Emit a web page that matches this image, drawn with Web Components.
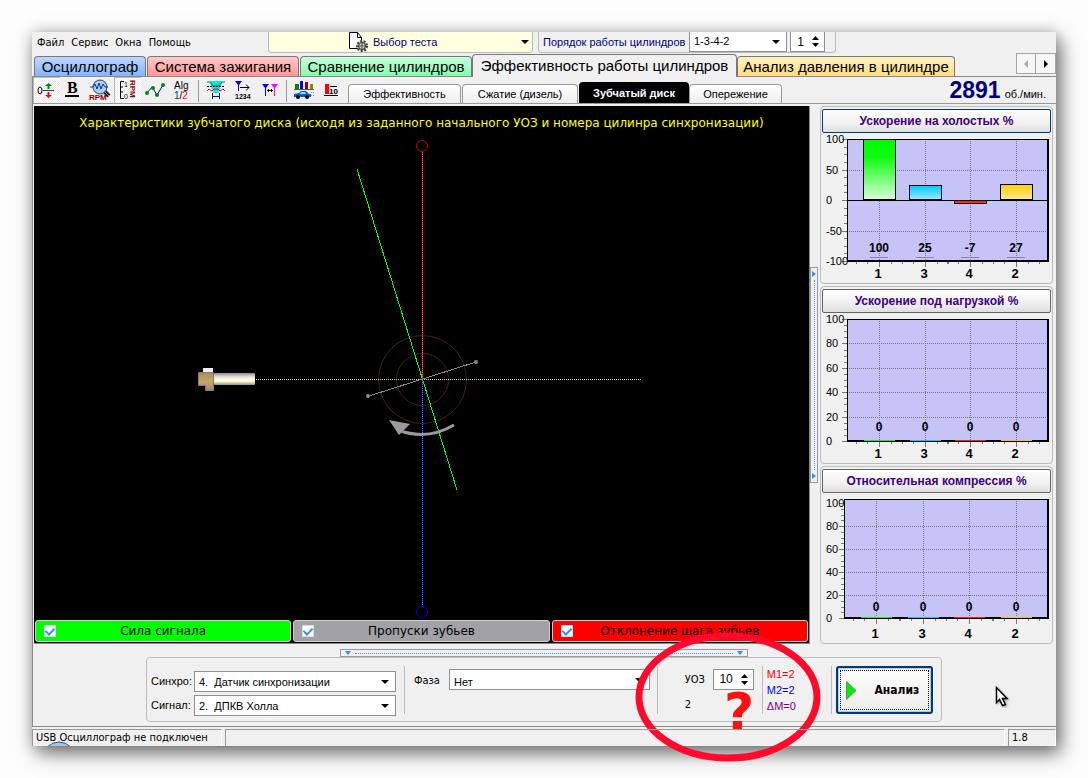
<!DOCTYPE html>
<html lang="ru">
<head>
<meta charset="utf-8">
<title>USB Осциллограф</title>
<style>
body{margin:0;padding:32px;background:#fdfdfd;font:11px/16px "Liberation Sans",Arial,sans-serif;color:#000}
</style>
</head>
<body>
<app-window>
  <menu-bar slot="menu"></menu-bar>
  <tab-strip slot="tabs"></tab-strip>
  <tool-bar slot="tools"></tool-bar>
  <disk-view slot="view">
    <signal-check tone="#00ff00">Сила сигнала</signal-check>
    <signal-check tone="#a2a1a6">Пропуски зубьев</signal-check>
    <signal-check tone="#ff0000">Отклонение шага зубьев</signal-check>
  </disk-view>
  <bar-chart slot="charts" min="-100" step="50" minor="12.5" values="100,25,-7,27" focused>Ускорение на холостых %</bar-chart>
  <bar-chart slot="charts" min="0" step="20" minor="5" values="0,0,0,0">Ускорение под нагрузкой %</bar-chart>
  <bar-chart slot="charts" min="0" step="20" minor="5" values="0,0,0,0" kind="wide">Относительная компрессия %</bar-chart>
  <control-panel slot="controls"></control-panel>
  <status-bar slot="status"></status-bar>
</app-window>

<script>
const reset = `*,:host{box-sizing:border-box}button,input,select{font:inherit;color:inherit;margin:0;border-radius:0}`;
function define(name, css, html, after) {
  const t = document.createElement('template');
  t.innerHTML = `<style>${reset}${css}</style>${html}`;
  customElements.define(name, class extends HTMLElement {
    constructor() {
      super();
      this.attachShadow({ mode: 'open' }).append(t.content.cloneNode(true));
    }
    connectedCallback() { if (after && !this.ready) { this.ready = true; after.call(this, this.shadowRoot); } }
  });
}

define('app-window', `
:host{display:flex;flex-direction:column;position:relative;background:#f0f0f0;
 box-shadow:0 0 14px rgba(0,0,0,.22),5px 8px 18px rgba(0,0,0,.5)}
.work{display:grid;grid-template-columns:minmax(0,1fr) 10px 233px;padding:2px 3px 0 1px;border-left:1px solid #888}
.grip{display:flex;align-items:center}
.charts{display:flex;flex-direction:column;gap:2px}`,
`<slot name="menu"></slot><slot name="tabs"></slot><slot name="tools"></slot>
<div class="work"><slot name="view"></slot><div class="grip"><split-grip vertical></split-grip></div>
<div class="charts"><slot name="charts"></slot></div></div>
<slot name="controls"></slot><slot name="status"></slot>`);

define('split-grip', `
:host{display:flex;align-items:center;justify-content:space-between;width:408px;height:8px;border:1px solid #9a9a9a;padding:0 4px;gap:4px}
:host([vertical]){flex-direction:column;width:8px;height:216px;padding:4px 0}
i{flex:1;height:0;border-top:1px dotted #3a96f0}
:host([vertical]) i{width:0;height:auto;border-top:0;border-left:1px dotted #3a96f0}
svg{display:block;fill:#2e90f8}
:host([vertical]) svg{transform:rotate(-90deg)}`,
`<svg width="6" height="4"><path d="M0 0h6L3 4z"/></svg><i></i><svg width="6" height="4"><path d="M0 0h6L3 4z"/></svg>`);

define('drop-down', `
:host{display:block;position:relative;background:#fff;border:1px solid #8f8f8f;height:21px}
select{appearance:none;width:100%;height:100%;border:0;background:none;padding:0 20px 1px 4px;outline:0;white-space:pre}
svg{position:absolute;right:6px;top:8px;pointer-events:none}
:host([plain]){border:0;background:none}
:host([plain]) svg{right:3px}`,
`<select></select><svg width="8" height="4"><path d="M0 0h8L4 4z"/></svg>`,
function (root) {
  const s = root.querySelector('select');
  s.setAttribute('aria-label', this.getAttribute('label'));
  for (const v of this.getAttribute('options').split('|')) s.add(new Option(v));
});

define('spin-box', `
:host{display:flex;background:#fff;border:1px solid #8f8f8f;height:21px;align-items:center;padding-right:4px}
input{appearance:textfield;-moz-appearance:textfield;border:0;background:none;outline:0;flex:1;min-width:0;width:0;text-align:right;padding:0;font-size:12px}
input::-webkit-inner-spin-button{appearance:none}
div{display:flex;flex-direction:column;gap:3px;margin-left:7px}
button{border:0;background:none;padding:0;display:block;height:4px;width:9px}
svg{display:block}`,
`<input type="number"><div><button aria-label="Больше"><svg width="9" height="4"><path d="M1 4h7L4.5 0z"/></svg></button><button aria-label="Меньше"><svg width="9" height="4"><path d="M1 0h7L4.5 4z"/></svg></button></div>`,
function (root) {
  const i = root.querySelector('input'), b = root.querySelectorAll('button');
  i.value = this.getAttribute('value');
  i.setAttribute('aria-label', this.getAttribute('label'));
  b[0].onclick = () => i.stepUp();
  b[1].onclick = () => i.stepDown();
});

define('menu-bar', `
:host{display:flex;height:22px;align-items:flex-start}
nav{display:flex;gap:7px;padding:3px 0 0 5px;width:236px;font:11px/16px "DejaVu Sans Condensed","DejaVu Sans",sans-serif}
a{color:#000;text-decoration:none}
.pick{display:flex;align-items:flex-start;width:265px;height:21px;background:#ffffe1;border:1px solid #bbb;border-top:0;border-radius:0 0 4px 4px;padding-left:79px;color:#000080}
.pick svg{flex:none}
.pick drop-down{flex:1;height:20px}
.order{display:flex;margin-left:5px;width:298px;height:21px;border:1px solid #bbb;border-top:0;border-radius:0 0 4px 4px;padding:0 10px 0 4px}
.order span{flex:1;color:#000080;line-height:20px;white-space:nowrap}
.order drop-down{width:98px;height:20px;border-top:0}
.order spin-box{width:35px;height:20px;margin-left:3px;border-top:0}`,
`<nav><a href="#">Файл</a><a href="#">Сервис</a><a href="#">Окна</a><a href="#">Помощь</a></nav>
<div class="pick"><svg width="21" height="21" fill="none" stroke="#000"><path fill="#fff" d="M1.500 .5h8l4 5v11h-12z"/><path d="M9.500 .5v5h4"/>
<circle cx="14" cy="14" r="5" fill="#bcc4b4" stroke="#444" stroke-width="2" stroke-dasharray="2 1.500"/><circle cx="14" cy="14" r="3.500" fill="#cdd3c6" stroke="#333"/><path d="M14 11v6M11 14h6" stroke="#555"/></svg>
<drop-down plain label="Выбор теста" options="Выбор теста"></drop-down></div>
<div class="order"><span>Порядок работы цилиндров</span><drop-down label="Порядок работы цилиндров" options="1-3-4-2"></drop-down><spin-box label="Цилиндр" value="1"></spin-box></div>`);

define('tab-strip', `
:host{display:flex;height:23px;align-items:flex-end;padding-left:2px;border-bottom:1px solid #888}
button{height:20px;border:1px solid #777;border-bottom:0;border-radius:4px 4px 0 0;font-size:15px;line-height:20px;padding:0;margin-right:1px;white-space:nowrap}
.a{width:112px;background:linear-gradient(#bdd8ff,#86b4fc)}
.b{width:152px;background:linear-gradient(#ffcaca,#ff9696)}
.c{width:172px;background:linear-gradient(#c6fedc,#86faae)}
.d{width:265px;height:23px;margin:0 0 -1px -1px;background:#f0f0f0;line-height:22px}
.e{width:218px;background:linear-gradient(#fff0c4,#ffdd80)}
div{display:flex;margin-left:auto;align-self:flex-start;height:21px;margin-top:-1px}
div button{width:20px;height:21px;border:1px solid #a5a5a5;border-radius:0;margin:0 0 0 -1px;background:#f6f6f6;display:grid;place-items:center}
div button:last-child{width:21px}`,
`<button class="a">Осциллограф</button><button class="b">Система зажигания</button><button class="c">Сравнение цилиндров</button><button class="d">Эффективность работы цилиндров</button><button class="e">Анализ давления в цилиндре</button>
<div><button aria-label="Назад"><svg width="4" height="8" fill="#aaa"><path d="M4 0v8L0 4z"/></svg></button><button aria-label="Вперёд"><svg width="4" height="8"><path d="M0 0v8l4-4z"/></svg></button></div>`);

define('tool-bar', `
:host{display:flex;height:27px;border-bottom:1px solid #999;border-left:1px solid #888}
.ico{flex:none;width:27px;height:26px;border:0;background:none;padding:0;display:grid;place-items:center}
.on{background:repeating-conic-gradient(#fff 0 25%,#eee 0 50%) 0 0/2px 2px;box-shadow:inset 1px 1px #bbb}
.sep{width:1px;height:22px;background:#999;margin:3px 3px 0 3px}
svg{display:block}
svg text{font-family:"Liberation Sans",sans-serif}
.tabs{display:flex;align-items:flex-end;margin-left:4px}
.tabs button{height:19px;border:1px solid #999;border-bottom:0;border-radius:4px 4px 0 0;background:linear-gradient(#fff,#ededed);padding:0;margin-right:1px;line-height:18px;font-size:11px}
.tabs .sel{height:21px;background:#000;color:#fff;font-weight:bold;border-color:#000;margin:0}
.w1{width:113px}.w2{width:116px}.w3{width:110px}.w4{width:93px}
.rpm{margin-left:auto;padding-right:10px;display:flex;align-items:baseline;gap:4px;line-height:27px;font-family:"Liberation Sans",sans-serif}
b{font-size:23px;color:#000080}`,
`<button class="ico on" aria-label="Ноль"><svg width="22" height="18"><ellipse cx="4" cy="9.500" rx="2" ry="3.500" fill="none" stroke="#000"/><path fill="#1a3a90" d="M7 9h11v1H7z"/><path fill="#080" d="M12.500 2l3.500 3h-2.500v3h-2V5H9z"/><path fill="red" d="M12.500 17l3.500-3h-2.500v-3h-2v3H9z"/></svg></button>
<button class="ico" aria-label="Жирные линии"><svg width="20" height="18"><text x="3" y="12" style="font:bold 16px 'Liberation Serif',serif">B</text><path d="M1 14h14v2H1z"/></svg></button>
<button class="ico" aria-label="Обороты"><svg width="26" height="22" fill="none"><path d="M15 11l6 6" stroke="#123" stroke-width="4"/><path d="M16 12l5 5" stroke="#c8a040"/><circle cx="12" cy="8" r="7" fill="#a8d0f4" stroke="#345"/><path d="M2 8h3l2-3 2 5 2-6 2 6 2-5 2 3h3" stroke="#103090"/><text x="1" y="21" font-size="8" font-weight="bold" fill="#900000">RPM</text></svg></button>
<button class="ico on" aria-label="Шкала оборотов"><svg width="22" height="22"><path d="M7 2.500H3.500v17H7M3.500 8H6M3.500 13H6" fill="none" stroke="#000"/><text x="7" y="8" font-size="7">1</text><text x="7" y="20" font-size="7">0</text><text transform="translate(13 1) rotate(90)" font-size="8" font-weight="bold" fill="#900000">RPM</text></svg></button>
<button class="ico" aria-label="График"><svg width="22" height="18" fill="#080"><path d="M3 12l5-6 5 8 6-10" fill="none" stroke="#00c"/><circle cx="3" cy="12" r="2"/><circle cx="9" cy="7" r="2"/><circle cx="13" cy="14" r="2"/><circle cx="19" cy="4" r="2"/></svg></button>
<button class="ico" aria-label="Алгоритм"><svg width="20" height="20"><text x="2" y="9" font-size="10">Alg</text><text x="2" y="19" font-size="10" fill="#003090">1<tspan fill="#000">/</tspan><tspan fill="red">2</tspan></text></svg></button>
<span class="sep"></span>
<button class="ico" aria-label="Фаза"><svg width="20" height="20"><path fill="#00e8f0" d="M4 1h12l-1 5-2 5v2H7v-2L5 6z"/><path d="M1 2h3l3 4h6l3-4h3" fill="none" stroke="#080"/><path d="M1 6.500h18" stroke="#000" stroke-dasharray="2 1"/><path d="M1 11l2-2 3 2 2-2h4l2 2 3-2 2 2" fill="none" stroke="red"/><path d="M6.500 13v6M13.500 13v6M7 16.500h7" stroke="#002080"/></svg></button>
<button class="ico" aria-label="Порядок цилиндров"><svg width="20" height="20"><path d="M2 1h7L6 5v6H5V5z" fill="#00f"/><path d="M7 7.500h9M13 4.500l3 3-3 3" fill="none" stroke="#000"/><text x="2" y="19" font-size="7" font-weight="bold">1234</text></svg></button>
<button class="ico" aria-label="Интервал"><svg width="20" height="18"><path d="M2 3h7L6 7v8H5V7z" fill="#00f"/><path d="M11 3h7l-3 4v8h-1V7z" fill="#f0f"/><path d="M7 9.500h6M8.500 8v3M11.500 8v3" stroke="#000"/></svg></button>
<span class="sep"></span>
<button class="ico" aria-label="Разгон"><svg width="22" height="20"><path fill="#080" d="M2 4h4v5H2z"/><path fill="#00f" d="M7 1h3v8H7z"/><path fill="#900" d="M12 2h3v7h-3z"/><path fill="#880" d="M17 4h3v5h-3z"/><path d="M1 9.500h20" stroke="#555"/><path fill="#0060d8" d="M1 14l5-1 2-2h5l3 3h2v3H1z"/><path d="M8 12h4l1 2H7z" fill="#9df"/><circle cx="5" cy="17" r="2"/><circle cx="14" cy="17" r="2"/><path d="M18 12.500h3M18 15.500h3" stroke="#999" stroke-dasharray="1 1"/></svg></button>
<button class="ico" aria-label="Десять"><svg width="16" height="16"><path fill="red" d="M2 2h4v10H2z"/><path d="M1 13.500h14M7 4.500h7" stroke="#000"/><text x="6" y="12" font-size="8" font-weight="bold">10</text></svg></button>
<div class="tabs"><button class="w1">Эффективность</button><button class="w2">Сжатие (дизель)</button><button class="w3 sel">Зубчатый диск</button><button class="w4">Опережение</button></div>
<div class="rpm"><b>2891</b><span>об./мин.</span></div>`);

define('disk-view', `
:host{display:flex;flex-direction:column;background:#000;border:solid #888;border-width:0 1px 1px 0}
h2{margin:0;padding-top:8px;height:26px;text-align:center;font:12px/18px "DejaVu Sans",Verdana,sans-serif;color:#ff0;white-space:nowrap}
svg{display:block;width:100%;flex:1;min-height:0;height:0}
.row{display:grid;grid-template-columns:repeat(3,minmax(0,1fr));gap:2px;padding:0 1px 1px}`,
`<h2>Характеристики зубчатого диска (исходя из заданного начального УОЗ и номера цилинра синхронизации)</h2>
<svg viewBox="0 0 775 488" fill="none" role="img" aria-label="Зубчатый диск">
<defs><linearGradient id="m" x2="0" y2="1"><stop stop-color="#8a8a94"/><stop offset=".3" stop-color="#dcdcdc"/><stop offset=".5" stop-color="#fffad8"/><stop offset=".7" stop-color="#fff8d0"/><stop offset="1" stop-color="#909098"/></linearGradient>
<linearGradient id="n" x2="0" y2="1"><stop stop-color="#a48a68"/><stop offset=".5" stop-color="#c8a860"/><stop offset="1" stop-color="#a48a68"/></linearGradient></defs>
<circle cx="388.500" cy="247.500" r="44" stroke="#4a2020"/><circle cx="388.500" cy="247.500" r="26" stroke="#4a2020"/>
<g shape-rendering="crispEdges"><path d="M222 247.500h386" stroke="#d8d8d0" stroke-dasharray="1 1"/>
<path d="M388.500 20v228" stroke="#f00"/><path d="M388.500 20v228" stroke="#f66" stroke-dasharray="1 1"/>
<path d="M388.500 248v226" stroke="#00f"/><path d="M388.500 248v226" stroke="#77f" stroke-dasharray="1 1"/>
<path d="M323 37l100 321" stroke="#0f0"/><path d="M335 264l107-34" stroke="#888"/></g>
<circle cx="388" cy="14" r="5.500" stroke="#c00"/><circle cx="388" cy="480" r="5.500" stroke="#00d"/>
<circle cx="334" cy="264" r="2" fill="#888"/><circle cx="442" cy="230" r="2" fill="#888"/>
<path d="M420 293q-27 16-56 5" stroke="#9a9a9e" stroke-width="3"/><path d="M355 288l21 4-11 11z" fill="#9a9a9e"/>
<rect x="180" y="241" width="41" height="12" rx="1" fill="url(#m)"/>
<path d="M169 236h10v5h-10z" fill="#eee"/><path d="M164.500 240.500h15v18h-8v-5h-7z" fill="url(#n)" stroke="#877a70"/></svg>
<div class="row"><slot></slot></div>`);

define('signal-check', `
:host{display:block}
label{display:flex;align-items:center;height:22px;border:1px solid #d0d0d0;border-radius:3px;background:var(--tone);padding:0 8px;font:12px/20px "DejaVu Sans",Verdana,sans-serif}
span{flex:1;text-align:center;padding-right:12px;white-space:nowrap}
input{appearance:none;width:12px;height:12px;background:#fff;border:1px solid #ddd;display:grid;place-items:center}
input:checked::before{content:"";width:4px;height:7px;border:solid #2e90f8;border-width:0 2px 2px 0;transform:rotate(45deg);margin-top:-2px}`,
`<label><input type="checkbox" checked><span><slot></slot></span></label>`,
function () { this.style.setProperty('--tone', this.getAttribute('tone')); });

define('bar-chart', `
:host{display:block;border:1px solid #bcbcbc;border-radius:4px;height:178px;padding:2px 1px 0}
button{display:block;width:100%;height:24px;border:1px solid #666;border-radius:2px;background:linear-gradient(#fff,#f0f0f0 60%,#dedede);font-weight:bold;font-size:12px;line-height:20px;color:#400080;padding:0}
:host([focused]) button{border-color:#003c74}
svg{display:block}
text{font-size:11px}
.v{font-size:12px;font-weight:bold;text-anchor:middle}
.k{font-size:13px;font-weight:bold;text-anchor:middle}`,
`<button><slot></slot></button><svg width="229" height="149" viewBox="0 0 229 149" shape-rendering="crispEdges">
<defs><linearGradient id="g0" x2="0" y2="1"><stop stop-color="#00ff00"/><stop offset=".3" stop-color="#10fa10"/><stop offset="1" stop-color="#d8ffd8"/></linearGradient>
<linearGradient id="g1" x2="0" y2="1"><stop stop-color="#00c8ff"/><stop offset="1" stop-color="#98e8ff"/></linearGradient>
<linearGradient id="g2" x2="0" y2="1"><stop stop-color="#f00"/><stop offset="1" stop-color="#f44"/></linearGradient>
<linearGradient id="g3" x2="0" y2="1"><stop stop-color="#fc0"/><stop offset="1" stop-color="#ffea98"/></linearGradient></defs><g></g></svg>`,
function (root) {
  const wide = this.getAttribute('kind') === 'wide';
  const min = +this.getAttribute('min'), step = +this.getAttribute('step'), minor = +this.getAttribute('minor');
  const left = wide ? 22 : 25, top = 6, bottom = wide ? 125 : 128, right = 226;
  const first = wide ? 10 : top, h = bottom - first;
  const xs = wide ? [54, 101, 147, 194] : [57, 103, 148, 194];
  const y = v => Math.round(bottom - (v - min) / (100 - min) * h);
  const names = ['1', '3', '4', '2'], tone = ['#2ee02e', '#30b8f0', '#f02020', '#f0c030'];
  let s = `<rect x="${left}" y="${top}" width="${right - left}" height="${bottom - top}" fill="#c6c3f6"/>`;
  for (let v = min; v <= 100; v += minor) s += `<path d="M${left - 3} ${y(v) + .5}h3" stroke="#777"/>`;
  for (let v = min; v <= 100; v += step) {
    s += `<path d="M${left - 5} ${y(v) + .5}h5" stroke="#777"/><text x="4" y="${y(v) + 4}">${v}</text>`;
    if (v > min && v < 100) s += `<path d="M${left} ${y(v) + .5}h${right - left}" stroke="#77778a" stroke-dasharray="1 1"/>`;
  }
  xs.forEach(x => s += `<path d="M${x + .5} ${top}V${bottom}" stroke="#77778a" stroke-dasharray="1 1"/>`);
  this.getAttribute('values').split(',').forEach((v, i) => {
    const x = xs[i], a = y(Math.max(v, 0)), b = y(Math.min(v, 0));
    if (v != 0) s += `<rect x="${x - 15.5}" y="${a + .5}" width="32" height="${Math.max(b - a, 3) - 1}" fill="url(#g${i})" stroke="#000"/>`;
    s += `<text class="v" x="${x}" y="${min < 0 ? 119 : 118}">${v}</text><text class="k" x="${x - 1}" y="145">${names[i]}</text>`;
    if (min < 0) s += `<path d="M${x - 9} 124.500h18" stroke="#8884a8"/>`;
    for (const d of [-23, -12, 12, 23]) s += `<path d="M${x + d + .5} ${bottom}v3" stroke="#777"/>`;
    s += `<path d="M${x + .5} ${bottom}v6" stroke="#777"/>`;
  });
  if (min < 0) s += `<path d="M${left} ${y(0) + .5}H${right}" stroke="#000"/>`;
  s += `<path d="M${left} ${top + .5}H${right}M${left + .5} ${top}V${bottom}" stroke="#000"/><rect x="${left}" y="${bottom - 1}" width="${right - left + 1}" height="2"/><rect x="${right - 1}" y="${top}" width="2" height="${bottom - top}"/>`;
  if (min >= 0) xs.forEach((x, i) => s += `<rect x="${x - 15}" y="${bottom - 1}" width="31" height="1" fill="${tone[i]}"/>`);
  root.querySelector('g').innerHTML = s;
});

define('control-panel', `
:host{display:flex;flex-direction:column;align-items:center;position:relative;border-left:1px solid #888;border-bottom:1px solid #888;padding:5px 1px 4px 0;font-family:"Liberation Sans",sans-serif}
.box{position:relative;display:flex;width:796px;height:65px;border:1px solid #bcbcbc;border-radius:4px;padding:0 8px 0 4px}
.sources{display:grid;grid-template-columns:43px 202px;row-gap:3px;align-content:start;padding-top:13px;line-height:21px}
.sep{width:1px;height:48px;background:#bbb;margin-top:8px}
.gap{margin-left:8px}
.phase{display:flex;width:253px;padding:11px 7px 0 9px;line-height:24px}
.phase span{width:35px}.phase drop-down{flex:1}
.uoz{width:104px;padding:11px 8px 0 27px;display:grid;grid-template-columns:28px 41px;align-content:start;row-gap:4px;line-height:21px}
.uoz,.phase span{font-family:"DejaVu Sans Condensed","DejaVu Sans",sans-serif}
.uoz span{font-size:11px}.uoz spin-box{font-family:"Liberation Sans",sans-serif}
.m{width:69px;padding:8px 0 0 4px;font-size:11px;line-height:16px}
.m div{height:16px}
.red{color:#f00}.blue{color:#00f}.violet{color:#800080}
.go{width:97px;height:48px;margin:8px 0 0 4px;border:2px solid #003c74;border-radius:3px;background:linear-gradient(#fff,#ecebe6);box-shadow:inset 0 0 0 1px #a8ccf0;padding:2px;font:bold 12px/16px "DejaVu Sans Condensed","DejaVu Sans",sans-serif}
.go span{display:flex;align-items:center;gap:17px;height:40px;padding-left:5px;border:1px dotted #000}
.mark{position:absolute;left:488px;top:-26px;width:186px;height:130px;pointer-events:none;overflow:visible}
.mark text{font:bold 52px "DejaVu Sans",Verdana,sans-serif}
.cursor{position:absolute;right:-70px;top:28px}`,
`<split-grip></split-grip>
<div class="box">
<div class="sources"><span>Синхро:</span><drop-down label="Синхро" options="4.&nbsp; Датчик синхронизации"></drop-down><span>Сигнал:</span><drop-down label="Сигнал" options="2.&nbsp; ДПКВ Холла"></drop-down></div>
<i class="sep gap"></i>
<div class="phase"><span>Фаза</span><drop-down label="Фаза" options="Нет"></drop-down></div>
<i class="sep"></i>
<div class="uoz"><span>УОЗ</span><spin-box label="УОЗ" value="10"></spin-box><span>2</span></div>
<i class="sep"></i>
<div class="m"><div class="red">M1=2</div><div class="blue">M2=2</div><div class="violet">ΔM=0</div></div>
<i class="sep"></i>
<button class="go"><span><svg width="11" height="19"><path d="M.5 .5L10 9.500.5 18.500z" fill="#00f000" stroke="#6a8a6a"/></svg>Анализ</span></button>
<svg class="mark" viewBox="0 0 186 130"><ellipse cx="93" cy="65" rx="89" ry="61" fill="none" stroke="#ff0a2d" stroke-width="7"/><text x="89" y="98" fill="#ff1010">?</text></svg>
<svg class="cursor" width="16" height="22"><path d="M1.500 1.500v15l3-3 3 6 3-1-3-6h4.500z" fill="#fff" stroke="#000" stroke-width="1.500" style="filter:drop-shadow(1px 1px 1px #999)"/></svg>
</div>`);

define('status-bar', `
:host{display:flex;gap:3px;padding-top:2px;height:19px;position:relative;font:11px/16px "DejaVu Sans Condensed","DejaVu Sans",sans-serif}
div{height:17px;border:solid #999;border-width:1px 0 0 1px;padding-left:3px;white-space:nowrap;position:relative;overflow:hidden;border-right:1px solid #fff}
.a{width:190px}.b{flex:1}.c{width:48px}
span{position:relative}
svg{position:absolute;left:9px;top:11px}`,
`<div class="a"><svg width="34" height="8"><circle cx="17" cy="17" r="16" fill="#a8c4d8" stroke="#28588a"/></svg><span>USB Осциллограф не подключен</span></div><div class="b"></div><div class="c">1.8</div>`);
</script>
</body>
</html>
